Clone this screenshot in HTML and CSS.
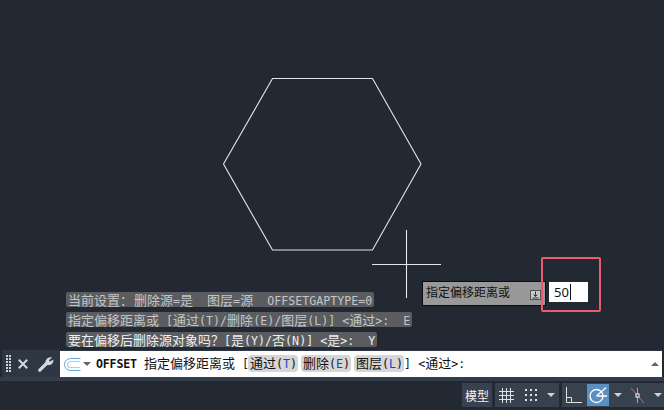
FILE: index.html
```html
<!DOCTYPE html>
<html lang="zh">
<head>
<meta charset="utf-8">
<title>OFFSET</title>
<link rel="stylesheet" href="styles.css">
</head>
<body>
<div class="app">
  <main class="viewport">
    <svg class="drawing" width="664" height="350" viewBox="0 0 664 350">
      <polygon class="shape" points="272.5,78.5 372.5,78.5 421,164 372.5,250 272.5,250 223.5,164"/>
      <path class="shape" d="M372 264.500H441M406.500 230V298"/>
    </svg>
    <div class="dyn">
      <div class="dyn-label"><span>指定偏移距离或</span>
        <svg class="dyn-ico" width="11" height="10" viewBox="0 0 11 10"><rect x=".5" y=".5" width="10" height="9" fill="#c8c8c8" stroke="#555"/><path d="M5.500 1.500V6.500M3.500 4.500L5.500 6.500L7.500 4.500M2.500 8H8.500" fill="none" stroke="#333"/></svg>
      </div>
      <div class="dyn-input">50<i class="caret"></i></div>
    </div>
    <div class="highlight"></div>
    <div class="history">
      <span class="hline"><span class="cn">当前设置：<span class="nudge">删除源</span></span>=<span class="cn">是</span>  <span class="cn">图层</span>=<span class="cn">源</span>  OFFSETGAPTYPE=0</span>
      <span class="hline"><span class="cn">指定偏移距离或</span> [<span class="cn">通过</span>(T)/<span class="cn">删除</span>(E)/<span class="cn">图层</span>(L)] &lt;<span class="cn">通过</span>&gt;:  E</span>
      <span class="hline bright"><span class="cn">要在偏移后删除源对象吗？</span>[<span class="cn">是</span>(Y)/<span class="cn">否</span>(N)] &lt;<span class="cn">是</span>&gt;:  Y</span>
    </div>
  </main>
  <section class="cmdbar">
    <div class="cmd-tools">
      <span class="grip"></span>
      <svg class="ico-x" width="10" height="10" viewBox="0 0 10 10"><path d="M.8 .8L9.200 9.200M9.200 .8L.8 9.200" stroke="#d5d8dc" stroke-width="2"/></svg>
      <svg class="ico-w" width="16" height="16" viewBox="0 0 16 16"><path d="M1.800 14.200L8.500 7.500" stroke="#d5d8dc" stroke-width="3.200" stroke-linecap="round"/><path d="M7.500 8.500C6.500 4 10 .3 14 1.500L11 4.300L12 5.800L15.300 3.500C16 7.500 12 10.500 7.500 8.500Z" fill="#d5d8dc"/></svg>
    </div>
    <div class="cmd-input">
      <svg class="ico-cmd" width="17" height="13" viewBox="0 0 17 13"><path d="M16.500 .5H6.500a6 6 0 0 0 0 12H16.500" fill="none" stroke="#58a8e8"/><path d="M16 3.500H6.500a3 3 0 0 0 0 6H16" fill="none" stroke="#c4c8cc" stroke-width="1.200"/></svg>
      <span class="tri dark"></span>
      <span class="cmd-text"><b>OFFSET</b> <span class="cn">指定偏移距离或</span> [<span class="opt first"><span class="cn">通过</span>(<em>T</em>)</span><span class="opt"><span class="cn">删除</span>(<em>E</em>)</span><span class="opt"><span class="cn">图层</span>(<em>L</em>)</span>] &lt;<span class="cn">通过</span>&gt;:</span>
      <span class="tri up"></span>
    </div>
  </section>
  <footer class="status">
    <div class="group model">模型</div>
    <div class="group tools">
      <svg width="15" height="15" viewBox="0 0 15 15"><path d="M0 3.500H15M0 7.500H15M0 11.500H15M3.500 0V15M7.500 0V15M11.500 0V15" stroke="#dfe2e6"/></svg>
      <svg class="dots" width="13" height="13" viewBox="0 0 13 13"><path d="M0 0h2v2H0zM5 0h2v2H5zM10 0h2v2h-2zM0 5h2v2H0zM5 5h2v2H5zM10 5h2v2h-2zM0 10h2v2H0zM5 10h2v2H5zM10 10h2v2h-2z" fill="#dfe2e6"/></svg>
      <span class="tri"></span>
    </div>
    <div class="group snap">
      <svg class="ortho" width="16" height="16" viewBox="0 0 16 16"><path d="M.5 0V15.500H16M.5 10.500H5.500V15.500" fill="none" stroke="#dfe2e6"/></svg>
      <span class="active"><svg width="20" height="20" viewBox="0 0 20 20"><circle cx="8.500" cy="11" r="6.500" fill="none" stroke="#fff" stroke-width="1.300"/><path d="M8.500 11L18 2.500M8.500 11H19" fill="none" stroke="#fff" stroke-width="1.300"/></svg></span>
      <span class="tri"></span>
      <svg class="polar" width="13" height="15" viewBox="0 0 13 15"><path d="M0 0L13 15" stroke="#e0605c"/><path d="M6.500 0V15" stroke="#6fcf6f"/><rect x="5" y="6" width="3" height="3" fill="#26303c" stroke="#fff"/></svg>
      <span class="tri"></span>
    </div>
  </footer>
</div>
</body>
</html>
```

FILE: styles.css
```css
html, body { margin: 0; padding: 0; }
body { background: #222933; overflow: hidden; }
.app {
  width: 664px; height: 410px; display: flex; flex-direction: column;
  background: #222933;
}
.viewport { position: relative; height: 350px; flex: none; }
.drawing { position: absolute; left: 0; top: 0; }
.shape { fill: none; stroke: #e4e6e8; stroke-width: 1.1; }

.cn { font: 13px/15px "Noto Sans CJK SC", sans-serif; }
.nudge { margin-left: 1px; }

.dyn { position: absolute; left: 422px; top: 281px; display: flex; gap: 3px; align-items: flex-start; }
.dyn-label {
  box-sizing: border-box; width: 124px; height: 25px;
  border: 1px solid #0c0c0c; background: #999;
  color: #111; font: 12px/19px "Noto Sans CJK SC", sans-serif;
  padding: 0 4px 0 3px;
  display: flex; justify-content: space-between;
}
.dyn-ico { margin-top: 8px; }
.dyn-input {
  box-sizing: border-box; width: 39px; height: 20px; margin-top: 1px; background: #fff;
  color: #111; font: 13px/20px "Noto Sans", sans-serif; padding-left: 5px;
  display: flex; align-items: center;
}
.caret { width: 1px; height: 16px; background: #111; margin-left: 1px; }
.highlight {
  position: absolute; left: 541px; top: 257px; width: 60px; height: 55px; box-sizing: border-box;
  border: 2px solid #ee5a6c; border-radius: 2px;
}

.history {
  position: absolute; left: 66px; top: 292px;
  display: flex; flex-direction: column; align-items: flex-start; gap: 5px;
}
.hline {
  height: 15px; padding: 0 2px; white-space: pre;
  background: #5a5c5f; border-radius: 2px; color: #c4c6c8;
  font: 11.650px/15px "DejaVu Sans Mono", monospace;
}
.hline.bright { color: #f0f0f0; }

.cmdbar { display: flex; height: 27px; flex: none; background: #2f3744; margin: 0 2px; }
.cmd-tools { width: 58px; flex: none; display: flex; align-items: center; padding-left: 4px; box-sizing: border-box; }
.grip {
  width: 5px; height: 18px;
  background:
    repeating-linear-gradient(90deg, transparent 0 2px, #2f3744 2px 3px),
    repeating-linear-gradient(#cfd3d8 0 2px, #2f3744 2px 3px);
}
.ico-x { margin-left: 7px; }
.ico-w { margin-left: 10px; }
.cmd-input {
  flex: 1; margin-top: 1px; background: #fff; display: flex; align-items: center; padding: 0 3px 0 4px;
  color: #111; white-space: pre;
}
.cmd-text { margin-left: 5px; font: 11.650px/17px "DejaVu Sans Mono", monospace; flex: 1; }
.cmd-text b { font-weight: bold; letter-spacing: -.2px; }
.opt { display: inline-block; height: 17px; background: #d6d6d6; border-radius: 4px; padding: 0 1px 0 2px; margin-left: 3px; vertical-align: top; }
.opt.first { margin-left: -1px; }
.opt em { font-style: normal; color: #1a3fd0; }

.tri { width: 0; height: 0; border: 4px solid transparent; border-top: 4px solid #d0d4d8; border-bottom: 0; flex: none; }
.tri.dark { border-top-color: #666; margin-left: 2px; }
.tri.up { border-top: 0; border-bottom: 4px solid #666; }

.status {
  flex: 1; border-top: 4px solid #333d4a; display: flex; justify-content: flex-end; gap: 3px;
  padding: 2px 0 3px; box-sizing: border-box;
}
.group { background: #38424f; display: flex; align-items: center; color: #f2f4f6; box-sizing: border-box; }
.model { width: 30px; justify-content: center; font: 12px "Noto Sans CJK SC", sans-serif; }
.tools { width: 64px; padding-left: 4px; }
.dots { margin-left: 11px; margin-top: 1px; }
.tools .tri { margin-left: 9px; }
.snap { width: 102px; padding-left: 4px; }
.active { width: 22px; height: 22px; background: #5b8fc0; display: flex; align-items: center; justify-content: center; margin-left: 5px; }
.snap .tri { margin-left: 5px; }
.polar { margin-left: 9px; }
.polar + .tri { margin-left: 10px; }
```
